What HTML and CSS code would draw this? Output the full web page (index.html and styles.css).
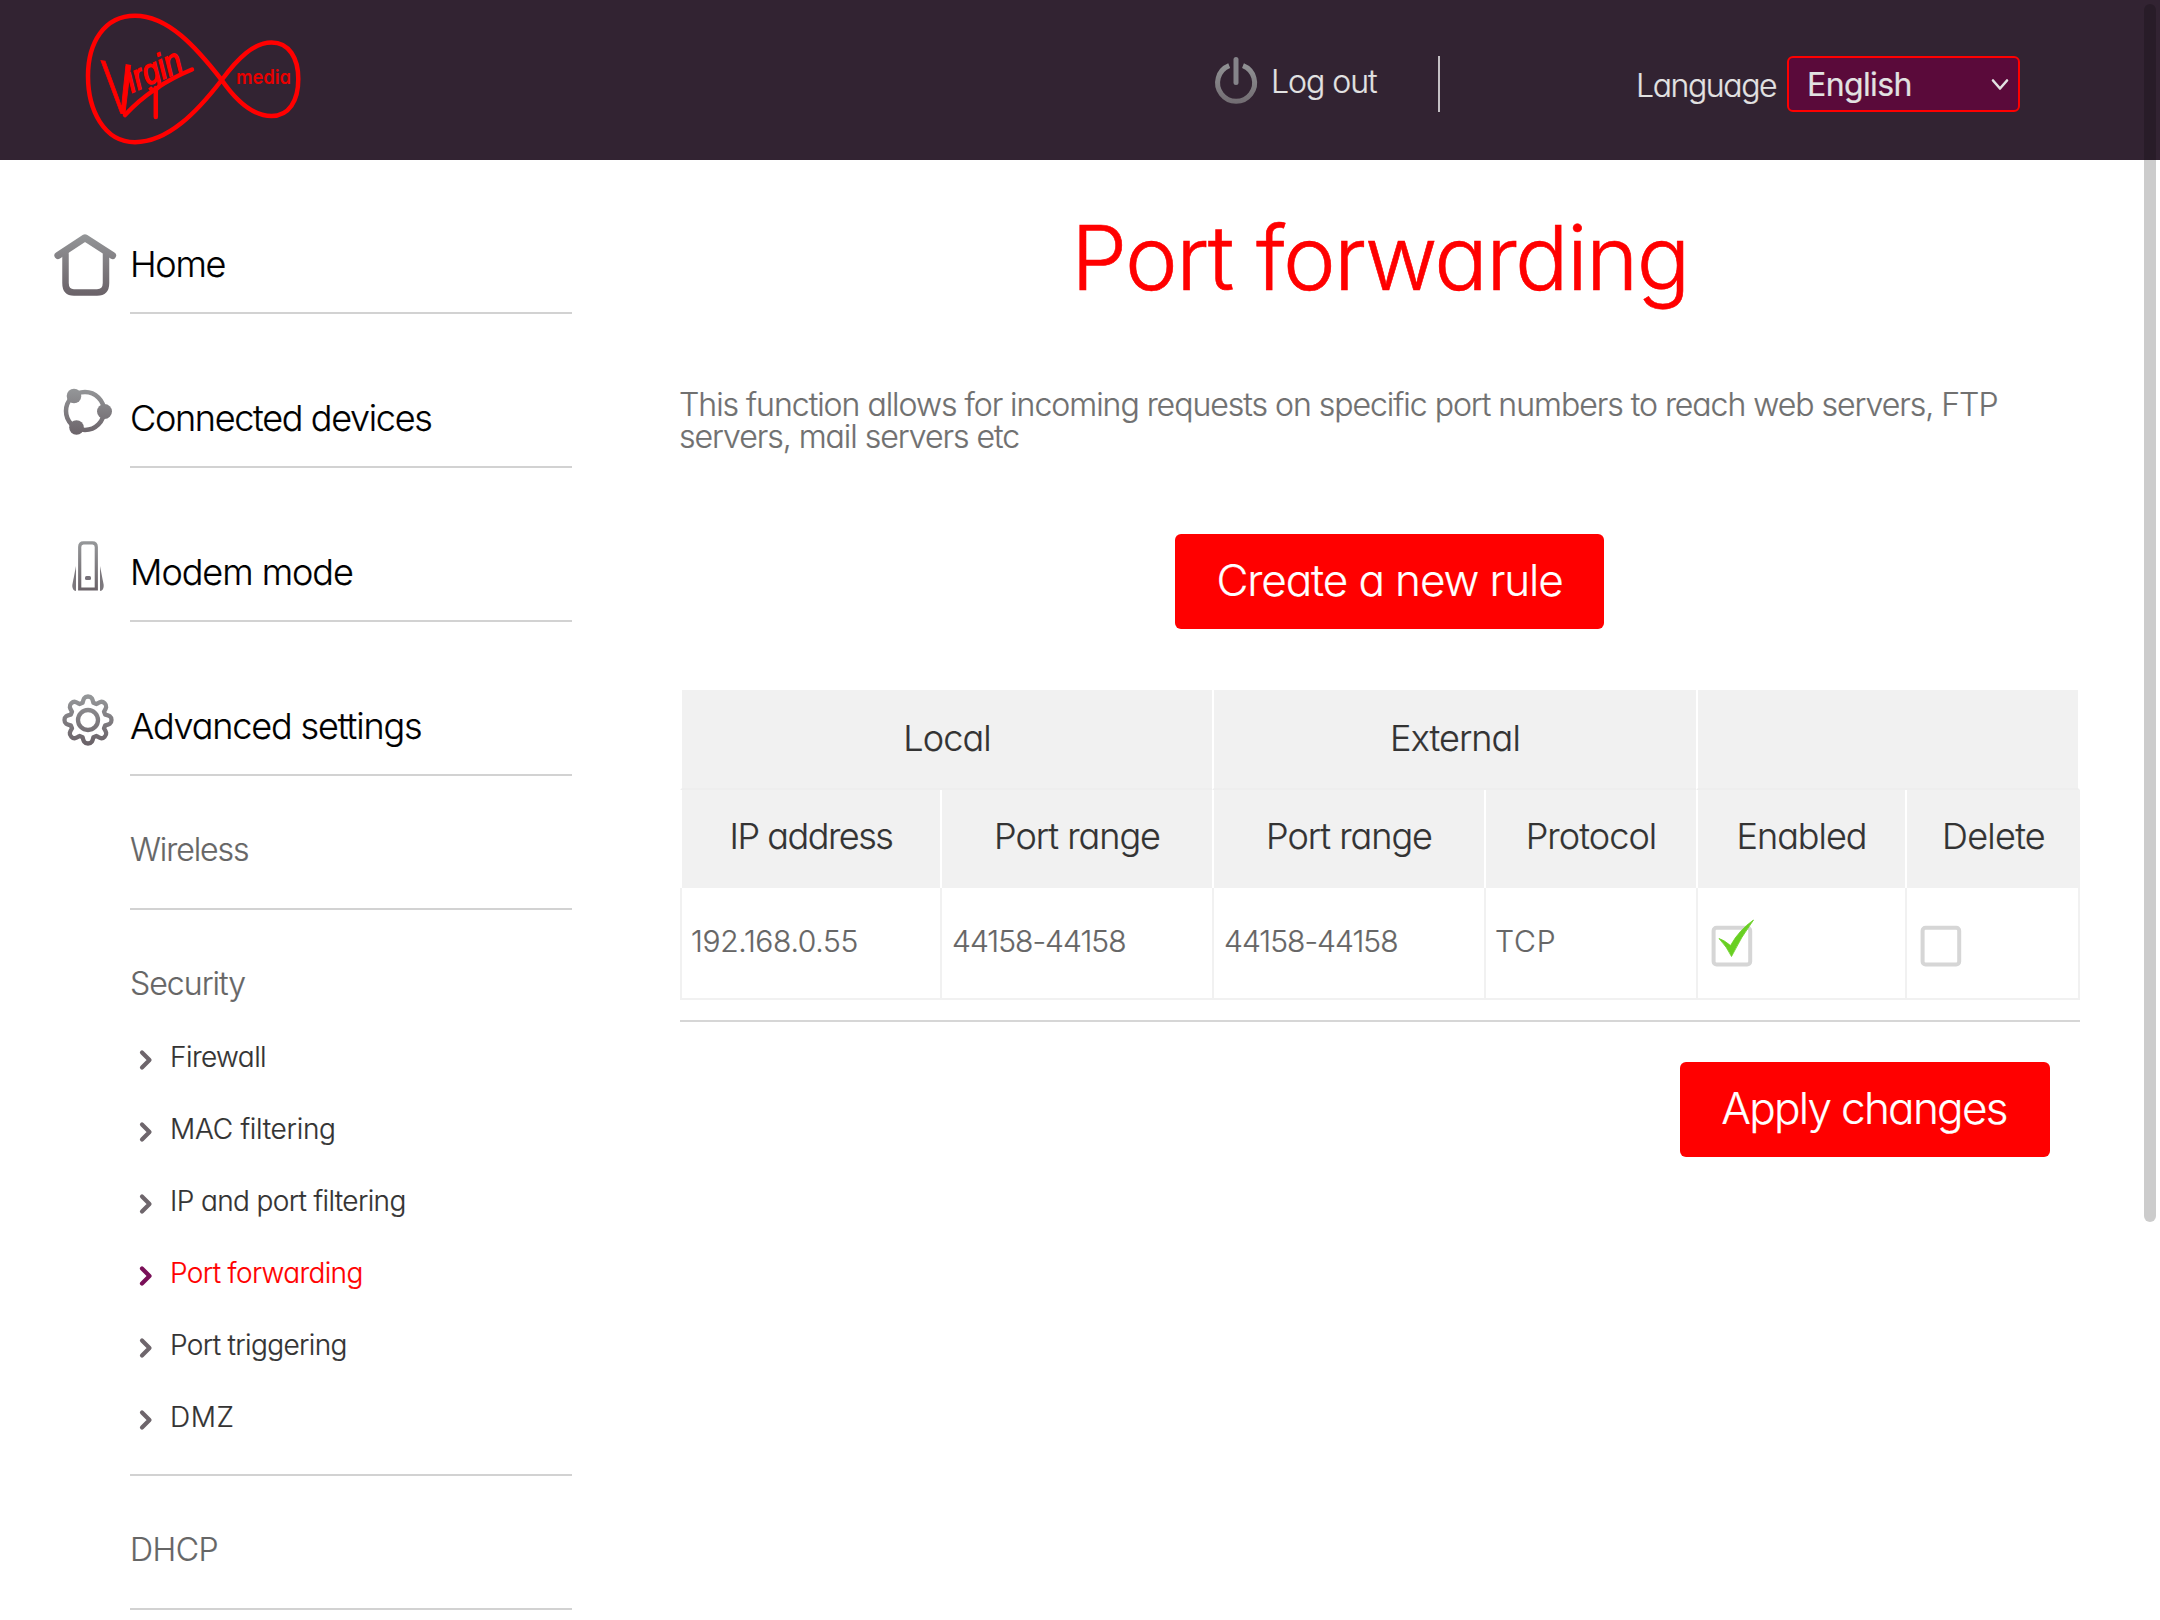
FILE: index.html
```html
<!DOCTYPE html>
<html lang="en">
<head>
<meta charset="utf-8">
<title>Port forwarding</title>
<link rel="stylesheet" href="styles.css">
</head>
<body>
<svg class="defs" width="0" height="0" aria-hidden="true">
  <defs>
    <linearGradient id="g1" gradientUnits="userSpaceOnUse" x1="0" y1="74" x2="0" y2="136"><stop offset="0" stop-color="#949698"/><stop offset="1" stop-color="#6a6268"/></linearGradient>
    <linearGradient id="g2" gradientUnits="userSpaceOnUse" x1="0" y1="75" x2="0" y2="122"><stop offset="0" stop-color="#949698"/><stop offset="1" stop-color="#6a6268"/></linearGradient>
    <linearGradient id="g3" gradientUnits="userSpaceOnUse" x1="0" y1="10" x2="0" y2="56"><stop offset="0" stop-color="#949698"/><stop offset="1" stop-color="#706a70"/></linearGradient>
  </defs>
</svg>
<header class="header">
  <svg class="logo" width="240" height="160" viewBox="70 0 240 160">
    <path class="logo-loop" d="M221.7 80 C196 47 168 15.7 135 15.7 C104 15.7 88 43 88 76 C88 110 104 142.2 135 142.2 C168 142.2 197 112 221.7 80 C238 58 254 42.5 271.5 42.5 C289 42.5 298.3 58 298.3 79 C298.3 101 289 116 271.5 116 C253 116 237 102 221.7 80 Z"/>
    <text class="logo-script" transform="translate(110 111.500) rotate(-23.5)"><tspan font-size="80" rotate="18" textLength="27" lengthAdjust="spacingAndGlyphs">V</tspan><tspan x="27.500" y="-8.500" rotate="0" font-size="36" textLength="58" lengthAdjust="spacingAndGlyphs">irgin</tspan></text>
    <path class="logo-swoosh" d="M125 115 Q152 86 192 69.500"/>
    <path class="logo-swoosh" d="M155.800 88 V117"/>
    <text class="logo-media" x="236" y="83.500" textLength="55" lengthAdjust="spacingAndGlyphs">media</text>
  </svg>
  <div class="logout">
    <svg width="50" height="56" viewBox="1210 50 50 56"><g fill="none" stroke="url(#g3)" stroke-width="5"><path transform="translate(1210 50)" d="M19.200 15.600A18.500 18.500 0 1 0 33 15.600"/></g><path d="M1236 59.500V82.500" fill="none" stroke="#85848a" stroke-width="5" stroke-linecap="round"/></svg>
    <span class="t-logout">Log out</span>
  </div>
  <div class="divider"></div>
  <div class="language">
    <span class="t-language">Language</span>
    <div class="select"><span>English</span><svg width="18" height="14" viewBox="0 0 18 14"><path d="M2 3.500L9 11.500L16 3.500" fill="none" stroke="#e2e2e2" stroke-width="2.600" stroke-linecap="round" stroke-linejoin="round"/></svg></div>
  </div>
</header>
<div class="page">
  <nav class="sidebar">
    <a class="item"><svg width="80" height="152"><g fill="none" stroke="url(#g1)" stroke-width="6.500" stroke-linecap="round" stroke-linejoin="round"><path d="M8 95.500L35 77.800L62.500 95.500" stroke-width="7.200"/><path d="M15.500 94V123Q15.500 132.500 24 132.500H47Q56 132.500 56 123V94"/></g></svg><span class="t-home">Home</span></a>
    <a class="item"><svg width="80" height="152"><circle cx="35" cy="97" r="19" fill="none" stroke="url(#g2)" stroke-width="4.500"/><g fill="url(#g2)"><circle cx="24" cy="82" r="7.300"/><circle cx="54.500" cy="97.500" r="7.500"/><circle cx="26.500" cy="113.500" r="7.300"/></g></svg><span class="t-devices">Connected devices</span></a>
    <a class="item"><svg width="80" height="152"><path d="M29.700 121V79Q29.700 74.800 33.500 74.800H42.500Q46.300 74.800 46.300 79V121Z" fill="none" stroke="url(#g2)" stroke-width="3.200"/><rect x="35" y="108" width="6" height="4" rx="1.500" fill="#77727a"/><path d="M26 98V123Q22 122.500 22.300 117Z" fill="#7c787d"/><path d="M50 98V123Q54 122.500 53.700 117Z" fill="#7c787d"/></svg><span class="t-modem">Modem mode</span></a>
    <a class="item"><svg width="80" height="152"><g fill="none" stroke="url(#g2)" stroke-width="4.300" stroke-linejoin="round"><circle cx="38" cy="98" r="10"/><path d="M32.600 80.800 C33.500 77 34 74.500 38 74.500 C42 74.500 42.500 77 43.400 80.800 L46.400 82 C49.700 80 51.900 78.500 54.700 81.300 C57.500 84.100 56 86.300 54 89.600 L55.200 92.600 C59 93.500 61.500 94 61.500 98 C61.500 102 59 102.500 55.200 103.400 L54 106.400 C56 109.700 57.500 111.900 54.700 114.700 C51.900 117.500 49.700 116 46.400 114 L43.400 115.200 C42.500 119 42 121.500 38 121.500 C34 121.500 33.500 119 32.600 115.200 L29.600 114 C26.300 116 24.100 117.500 21.300 114.700 C18.500 111.900 20 109.700 22 106.400 L20.800 103.400 C17 102.500 14.500 102 14.500 98 C14.500 94 17 93.500 20.800 92.600 L22 89.600 C20 86.300 18.500 84.100 21.300 81.300 C24.100 78.500 26.300 80 29.600 82 Z"/></g></svg><span class="t-advanced">Advanced settings</span></a>
    <div class="section"><a class="head t-wireless">Wireless</a></div>
    <div class="section">
      <a class="head t-security">Security</a>
      <ul class="sub">
        <li><svg class="chev" width="14" height="22"><path d="M3 3.500L10.500 11L3 18.500"/></svg><span class="t-firewall">Firewall</span></li>
        <li><svg class="chev" width="14" height="22"><path d="M3 3.500L10.500 11L3 18.500"/></svg><span class="t-mac">MAC filtering</span></li>
        <li><svg class="chev" width="14" height="22"><path d="M3 3.500L10.500 11L3 18.500"/></svg><span class="t-ipport">IP and port filtering</span></li>
        <li class="active"><svg class="chev" width="14" height="22"><path d="M3 3.500L10.500 11L3 18.500"/></svg><span class="t-ipport">Port forwarding</span></li>
        <li><svg class="chev" width="14" height="22"><path d="M3 3.500L10.500 11L3 18.500"/></svg><span class="t-ipport">Port triggering</span></li>
        <li><svg class="chev" width="14" height="22"><path d="M3 3.500L10.500 11L3 18.500"/></svg><span class="t-dmz">DMZ</span></li>
      </ul>
      <div class="sub-end"></div>
    </div>
    <div class="section"><a class="head t-dhcp">DHCP</a></div>
  </nav>
  <main class="main">
    <h1>Port forwarding</h1>
    <p class="intro">This function allows for incoming requests on specific port numbers to reach web servers, FTP<br>servers, mail servers etc</p>
    <button class="btn create">Create a new rule</button>
    <table class="rules">
      <colgroup><col class="c1"><col class="c2"><col class="c3"><col class="c4"><col class="c5"><col class="c6"></colgroup>
      <thead>
        <tr class="group"><th colspan="2" class="t-group">Local</th><th colspan="2" class="t-group">External</th><th colspan="2"></th></tr>
        <tr class="cols"><th class="t-address">IP address</th><th>Port range</th><th>Port range</th><th class="t-group">Protocol</th><th>Enabled</th><th class="t-delete">Delete</th></tr>
      </thead>
      <tbody>
        <tr><td class="t-ip">192.168.0.55</td><td class="t-ports">44158-44158</td><td class="t-ports">44158-44158</td><td class="t-tcp">TCP</td>
          <td class="check"><svg width="60" height="60"><rect x="6.600" y="14.800" width="36.600" height="36.600" rx="3" fill="#fff" stroke="#d6d6d6" stroke-width="4"/><path d="M12 25.500Q17 27 23.500 32.500Q32 17 46.500 7Q34 24 24.500 43.500Q20 34 12 25.500Z" fill="#68cf22" stroke="#68cf22" stroke-width=".8"/></svg></td>
          <td class="check"><svg width="60" height="60"><rect x="6.600" y="14.800" width="36.600" height="36.600" rx="3" fill="#fff" stroke="#d6d6d6" stroke-width="4"/></svg></td></tr>
      </tbody>
    </table>
    <div class="actions"><button class="btn apply">Apply changes</button></div>
  </main>
</div>
<div class="scrollbar"></div>
</body>
</html>
```
FILE: styles.css
```css
* { box-sizing: border-box; }

body {
  margin: 0;
  height: 1620px;
  overflow: hidden;
  background: #fff;
  color: #000;
  font-family: Inter, "Liberation Sans", sans-serif;
  font-weight: 300;
  font-feature-settings: "cv11";
  -webkit-text-stroke-width: .2px;
}

.defs { display: block; height: 0; }
svg { display: block; flex: none; }

/* Header */
.header {
  display: flex;
  height: 160px;
  padding-left: 70px;
  background: #322332;
  color: #e2e2e2;
  font-size: 32px;
  line-height: 40px;
}
.logo-loop { fill: none; stroke: #f00; stroke-width: 4.5; }
.logo-script { fill: #f00; stroke: #f00; stroke-width: 1.4; font-family: "Liberation Sans", sans-serif; font-style: italic; }
.logo-swoosh { fill: none; stroke: #f00; stroke-width: 4.5; stroke-linecap: round; }
.logo-media { fill: #e80000; font-size: 19.5px; font-weight: 600; }
.logout { display: flex; margin-left: 900px; padding-top: 50px; width: 228px; }
.logout span { margin: 12px 0 0 11px; }
.divider { width: 2px; height: 56px; margin-top: 56px; background: #c4c0c4; }
.language { display: flex; margin-left: 196px; padding-top: 56px; }
.language > span { width: 151px; padding-top: 11px; line-height: 38px; white-space: nowrap; }
.select {
  display: flex;
  align-items: center;
  justify-content: space-between;
  width: 233px;
  height: 56px;
  padding: 0 9px 0 18px;
  border: 2px solid #f00;
  border-radius: 6px;
  background: #5a0a3a;
  font-weight: 400;
  letter-spacing: -.019em;
}
.select span { padding-top: 2px; }

/* Page */
.page { display: flex; height: 1460px; overflow: hidden; }
.sidebar { width: 572px; padding-left: 50px; flex: none; }
.item { display: flex; height: 154px; font-size: 36px; line-height: 40px; }
.item span { flex: 1; padding-top: 84px; border-bottom: 2px solid #d2d2d2; }
.section { margin-left: 80px; padding-top: 56px; border-bottom: 2px solid #d2d2d2; }
.head { display: block; height: 76px; font-size: 32px; line-height: 36px; color: #666; }
.sub { list-style: none; margin: -21px 0 0; padding: 0 0 0 9px; font-size: 28px; color: #333; }
.sub li { display: flex; align-items: center; height: 72px; gap: 17px; }
.sub-end { height: 21px; }
.chev { margin-top: 5px; }
.chev path { fill: none; stroke: #6e666c; stroke-width: 4.2; stroke-linecap: round; stroke-linejoin: round; }
.active { color: #f00; }
.active .chev path { stroke: #7a1058; }

.main { width: 1400px; margin-left: 108px; padding-top: 48px; }
h1 { margin: 0; font-size: 89px; line-height: 100px; font-weight: 300; text-align: center; color: #f00; letter-spacing: -.0188em; -webkit-text-stroke-width: .6px; }
.intro { margin: 81px 0 0 -1px; font-size: 32px; line-height: 32px; color: #707070; letter-spacing: -.0317em; white-space: nowrap; }
.btn {
  display: block;
  height: 95px;
  padding: 0 0 2px;
  border: 0;
  border-radius: 6px;
  background: #f00;
  color: #fff;
  font: 300 44px/93px Inter, "Liberation Sans", sans-serif;
  font-feature-settings: "cv11";
  white-space: nowrap;
}
.create { width: 429px; margin: 81px 0 61px 495px; letter-spacing: -.025em; }
.apply { width: 370px; padding-right: 2px; letter-spacing: -.0385em; }
.actions { display: flex; justify-content: flex-end; margin-top: 20px; padding: 40px 30px 0 0; border-top: 2px solid #d6d6d6; }

/* Rules table */
.rules { width: 1400px; table-layout: fixed; border-collapse: separate; border-spacing: 0; }
.c1 { width: 260px; } .c2 { width: 272px; } .c3 { width: 272px; }
.c4 { width: 212px; } .c5 { width: 209px; } .c6 { width: 175px; }
.rules th {
  padding: 0;
  border-left: 2px solid #fff;
  background: #f1f1f1;
  color: #333;
  font-size: 36px;
  line-height: 40px;
  font-weight: 300;
  vertical-align: top;
  letter-spacing: -.0275em;
}
.rules .group th { height: 100px; padding-top: 28px; border-bottom: 2px solid #eee; }
.rules .group th:last-child { border-right: 2px solid #fff; }
.rules .cols th { height: 98px; padding-top: 26px; }
.rules td {
  height: 112px;
  padding: 35px 0 0 10px;
  border-left: 2px solid #f1f1f1;
  border-bottom: 2px solid #f1f1f1;
  color: #666;
  font-size: 30px;
  line-height: 36px;
  vertical-align: top;
}
.rules td:first-child { padding-left: 9px; }
.rules td:last-child { border-right: 2px solid #f1f1f1; }
.rules td.check { padding: 25px 0 0 9px; }

/* Tracking per label */
.t-logout { letter-spacing: -.032em; }
.t-language { letter-spacing: -.0436em; }
.t-home { letter-spacing: -.036em; }
.t-devices { letter-spacing: -.0365em; }
.t-modem { letter-spacing: -.0285em; }
.t-advanced { letter-spacing: -.0315em; }
.t-wireless { letter-spacing: -.033em; }
.t-security { letter-spacing: -.030em; }
.t-firewall { letter-spacing: -.020em; }
.t-mac { letter-spacing: -.010em; }
.t-ipport { letter-spacing: -.0225em; }
.t-dmz { letter-spacing: .020em; }
.t-dhcp { letter-spacing: -.015em; }
.rules .t-group { letter-spacing: -.025em; }
.rules .t-address { letter-spacing: -.041em; }
.rules .t-delete { letter-spacing: -.020em; }
.t-ip { letter-spacing: -.0105em; }
.t-ports { letter-spacing: -.0315em; }
.rules td.t-tcp { letter-spacing: .027em; padding-left: 9px; }

.scrollbar {
  position: absolute;
  left: 2144px;
  top: 4px;
  width: 12px;
  height: 1218px;
  border-radius: 6px;
  background: rgba(0, 0, 0, .2);
}
```
